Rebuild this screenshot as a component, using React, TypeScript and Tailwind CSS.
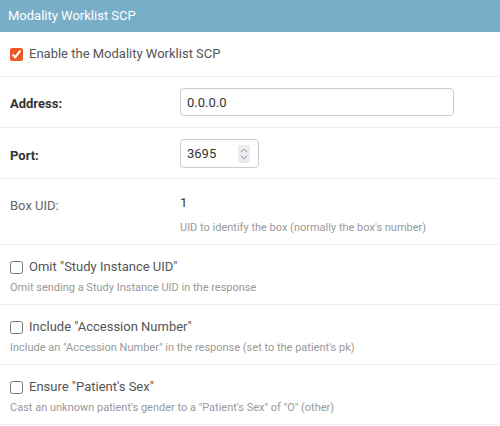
export default function App() {
  return (
    <div className="w-[500px] h-[426px] bg-white font-['Roboto',sans-serif] overflow-hidden">
      <div className="h-8 bg-[#79aec8] px-2 flex items-center text-[13px] text-white">
        Modality Worklist SCP
      </div>

      {/* Enable checkbox */}
      <div className="h-[45px] border-b border-[#eeeeee] px-[10px] flex items-center">
        <input
          type="checkbox"
          defaultChecked
          className="m-0 w-[13px] h-[13px] accent-[#eb5a26]"
        />
        <span className="ml-[6px] text-[13px] text-[#555]">Enable the Modality Worklist SCP</span>
      </div>

      {/* Address */}
      <div className="h-[51px] border-b border-[#eeeeee] px-[10px] flex items-center">
        <label className="w-[170px] pt-[4px] text-[13px] font-bold text-[#333]">Address:</label>
        <input
          type="text"
          defaultValue="0.0.0.0"
          className="w-[274px] h-[28px] border border-[#cccccc] rounded-[4px] px-[6px] text-[13px] text-[#333] outline-none"
        />
      </div>

      {/* Port */}
      <div className="h-[51px] border-b border-[#eeeeee] px-[10px] flex items-center">
        <label className="w-[170px] pt-[5px] text-[13px] font-bold text-[#333]">Port:</label>
        <div className="relative w-[79px] h-[29px]">
          <input
            type="text"
            defaultValue="3695"
            className="w-full h-full border border-[#cccccc] rounded-[4px] px-[6px] text-[13px] text-[#333] outline-none"
          />
          <div className="absolute left-[58px] top-[6px] w-[12px] h-[18px] bg-[#ebebf0] flex flex-col items-center justify-center gap-[2px]">
            <svg width="8" height="5" viewBox="0 0 8 5" fill="none">
              <path d="M1 4.2L4 1.2L7 4.2" stroke="#8a8a90" strokeWidth="1" />
            </svg>
            <svg width="8" height="5" viewBox="0 0 8 5" fill="none">
              <path d="M1 0.8L4 3.8L7 0.8" stroke="#8a8a90" strokeWidth="1" />
            </svg>
          </div>
        </div>
      </div>

      {/* Box UID */}
      <div className="h-[66px] border-b border-[#eeeeee] px-[10px] flex">
        <div className="w-[170px] pt-[18px] text-[13px] leading-[18px] text-[#666]">Box UID:</div>
        <div className="pt-[15px]">
          <div className="text-[13px] leading-[18px] text-[#333]">1</div>
          <div className="mt-[9px] text-[11px] leading-[14px] text-[#999]">
            UID to identify the box (normally the box's number)
          </div>
        </div>
      </div>

      <CheckRow
        label={'Omit "Study Instance UID"'}
        help="Omit sending a Study Instance UID in the response"
      />
      <CheckRow
        label={'Include "Accession Number"'}
        help={'Include an "Accession Number" in the response (set to the patient\'s pk)'}
      />
      <CheckRow
        label={'Ensure "Patient\'s Sex"'}
        help={'Cast an unknown patient\'s gender to a "Patient\'s Sex" of "O" (other)'}
      />
    </div>
  )
}

function CheckRow({ label, help }: { label: string; help: string }) {
  return (
    <div className="h-[60px] border-b border-[#eeeeee] px-[10px] pt-[13px]">
      <div className="flex items-center h-[18px]">
        <input type="checkbox" className="m-0 w-[13px] h-[13px] accent-[#eb5a26]" />
        <span className="ml-[6px] text-[13px] text-[#555]">{label}</span>
      </div>
      <div className="mt-[5px] text-[11px] leading-[14px] text-[#999]">{help}</div>
    </div>
  )
}
